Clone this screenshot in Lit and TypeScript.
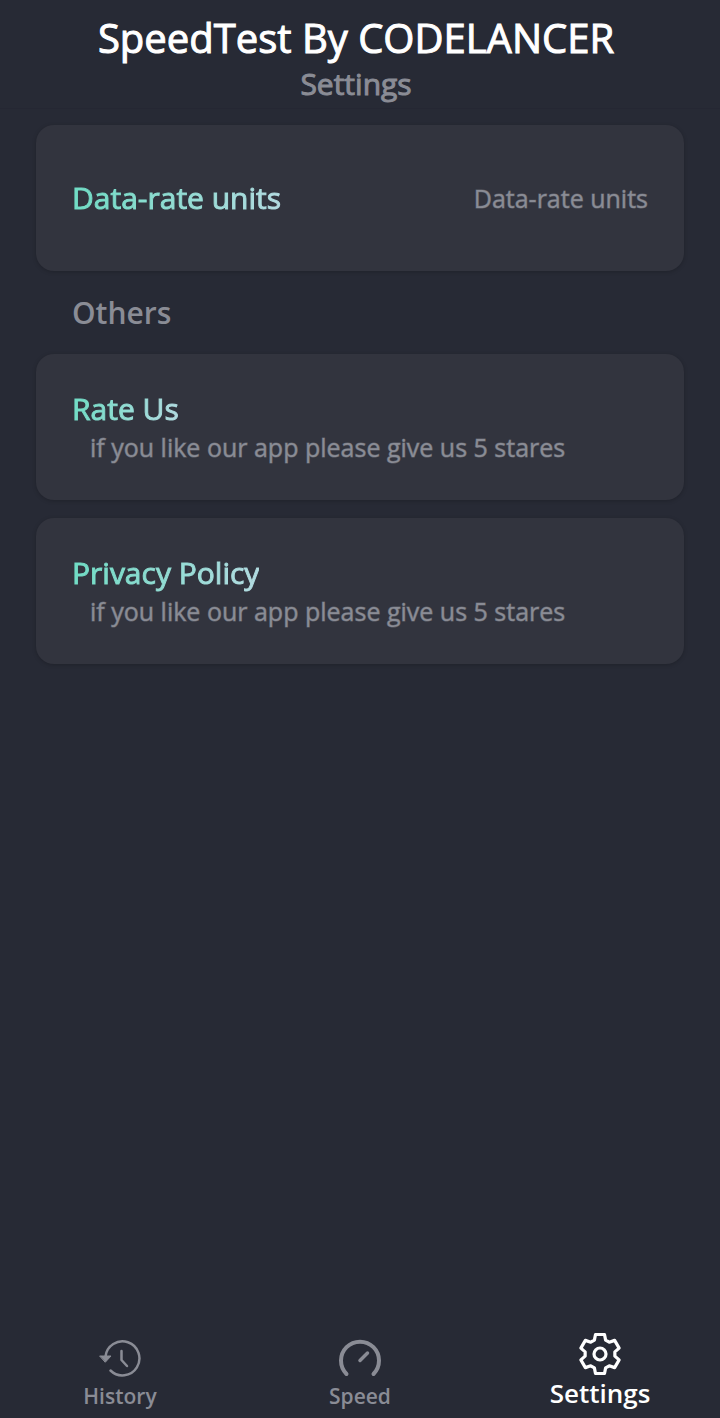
import { LitElement, html, svg, css } from "lit";
import { customElement, property, state } from "lit/decorators.js";

const gearPath = (() => {
  const points: string[] = [];
  const at = (radius: number, degrees: number) => {
    const a = (degrees * Math.PI) / 180;
    points.push(`${(22 + radius * Math.cos(a)).toFixed(2)} ${(22 + radius * Math.sin(a)).toFixed(2)}`);
  };
  for (let tooth = 0; tooth < 6; tooth++) {
    const mid = -90 + tooth * 60;
    at(15, mid - 22);
    at(20, mid - 13);
    at(20, mid + 13);
    at(15, mid + 22);
  }
  return `M${points.join("L")}Z`;
})();

const icons: Record<string, unknown> = {
  history: svg`
    <path d="M7.500 18.500A17 17 0 1 1 12.500 32.500" stroke-width="2.500"/>
    <path d="M2 18h11l-5.500 6z" fill="currentColor" stroke-width="1"/>
    <path d="M23.500 13v9l5.500 6" stroke-width="2.500"/>`,
  speed: svg`
    <path d="M8.500 36A19 19 0 1 1 35.500 36" stroke-width="4"/>
    <path d="M22 22.500l7.500-7.500" stroke-width="3.500"/>`,
  settings: svg`
    <path d=${gearPath} stroke-width="3.200"/>
    <circle cx="22" cy="22" r="6" stroke-width="3.200"/>`,
};

@customElement("setting-card")
export class SettingCard extends LitElement {
  @property() heading = "";
  @property() value = "";
  @property() note = "";

  static styles = css`
    :host {
      display: block;
    }
    .card {
      display: flex;
      align-items: center;
      justify-content: space-between;
      gap: 16px;
      box-sizing: border-box;
      width: 100%;
      min-height: 146px;
      margin: 0;
      padding: 16px 36px;
      border: 0;
      border-radius: 18px;
      background: #32343e;
      box-shadow: 0 1px 4px rgba(0, 0, 0, 0.2);
      color: #8a8c95;
      font: inherit;
      text-align: left;
      cursor: pointer;
    }
    .text {
      display: flex;
      flex-direction: column;
      align-items: flex-start;
    }
    .heading {
      font-size: 30px;
      line-height: 40px;
      background: linear-gradient(100deg, #6fdcc4, #b4dce2);
      -webkit-background-clip: text;
      background-clip: text;
      color: transparent;
      -webkit-text-stroke: 1px transparent;
    }
    .note,
    .value {
      font-size: 25px;
      line-height: 36px;
      font-weight: 400;
      -webkit-text-stroke: 1px rgba(138, 140, 149, 0.5);
    }
    .note {
      padding-left: 18px;
    }
  `;

  render() {
    return html`<button class="card" type="button">
      <span class="text">
        <span class="heading">${this.heading}</span>
        ${this.note ? html`<span class="note">${this.note}</span>` : null}
      </span>
      ${this.value ? html`<span class="value">${this.value}</span>` : null}
    </button>`;
  }
}

@customElement("app-root")
export class AppRoot extends LitElement {
  @state() private current = "settings";

  static styles = css`
    :host {
      display: flex;
      flex-direction: column;
      min-height: 100vh;
      background: #272a35;
      color: #8a8c95;
      font-family: "Open Sans", "Noto Sans", sans-serif;
    }
    .top {
      padding: 12px 32px 4px 24px;
      text-align: center;
      border-bottom: 1px solid #252733;
    }
    .title,
    .page {
      margin: 0;
      font-weight: 400;
      -webkit-text-stroke: 1px currentColor;
    }
    .title {
      color: #fff;
      font-size: 40px;
      line-height: 52px;
    }
    .page {
      font-size: 30px;
      line-height: 40px;
    }
    .list {
      flex: 1;
      display: flex;
      flex-direction: column;
      gap: 18px;
      padding: 16px 36px;
    }
    .group {
      margin: 0;
      padding: 0 36px;
      font-size: 30px;
      font-weight: 600;
      line-height: 47px;
    }
    .tabs {
      display: grid;
      grid-template-columns: repeat(3, 1fr);
      align-items: end;
    }
    .tab {
      display: flex;
      flex-direction: column;
      align-items: center;
      padding: 4px 0 8px;
      color: #8a8c95;
      font-size: 21px;
      font-weight: 600;
      line-height: 28px;
      text-decoration: none;
    }
    .tab.active {
      color: #fff;
      font-size: 26px;
      line-height: 34px;
    }
    .icon {
      display: block;
      width: 44px;
      height: 44px;
      fill: none;
      stroke: currentColor;
      stroke-linecap: round;
      stroke-linejoin: round;
    }
  `;

  private tab(id: string, label: string) {
    return html`<a
      class="tab ${this.current === id ? "active" : ""}"
      href="#${id}"
      @click=${() => (this.current = id)}
    >
      <svg class="icon" viewBox="0 0 44 44" aria-hidden="true">${icons[id]}</svg>
      <span>${label}</span>
    </a>`;
  }

  render() {
    return html`
      <header class="top">
        <h1 class="title">SpeedTest By CODELANCER</h1>
        <p class="page">Settings</p>
      </header>
      <main class="list">
        <setting-card heading="Data-rate units" value="Data-rate units"></setting-card>
        <h2 class="group">Others</h2>
        <setting-card heading="Rate Us" note="if you like our app please give us 5 stares"></setting-card>
        <setting-card heading="Privacy Policy" note="if you like our app please give us 5 stares"></setting-card>
      </main>
      <nav class="tabs">
        ${this.tab("history", "History")} ${this.tab("speed", "Speed")} ${this.tab("settings", "Settings")}
      </nav>
    `;
  }
}
